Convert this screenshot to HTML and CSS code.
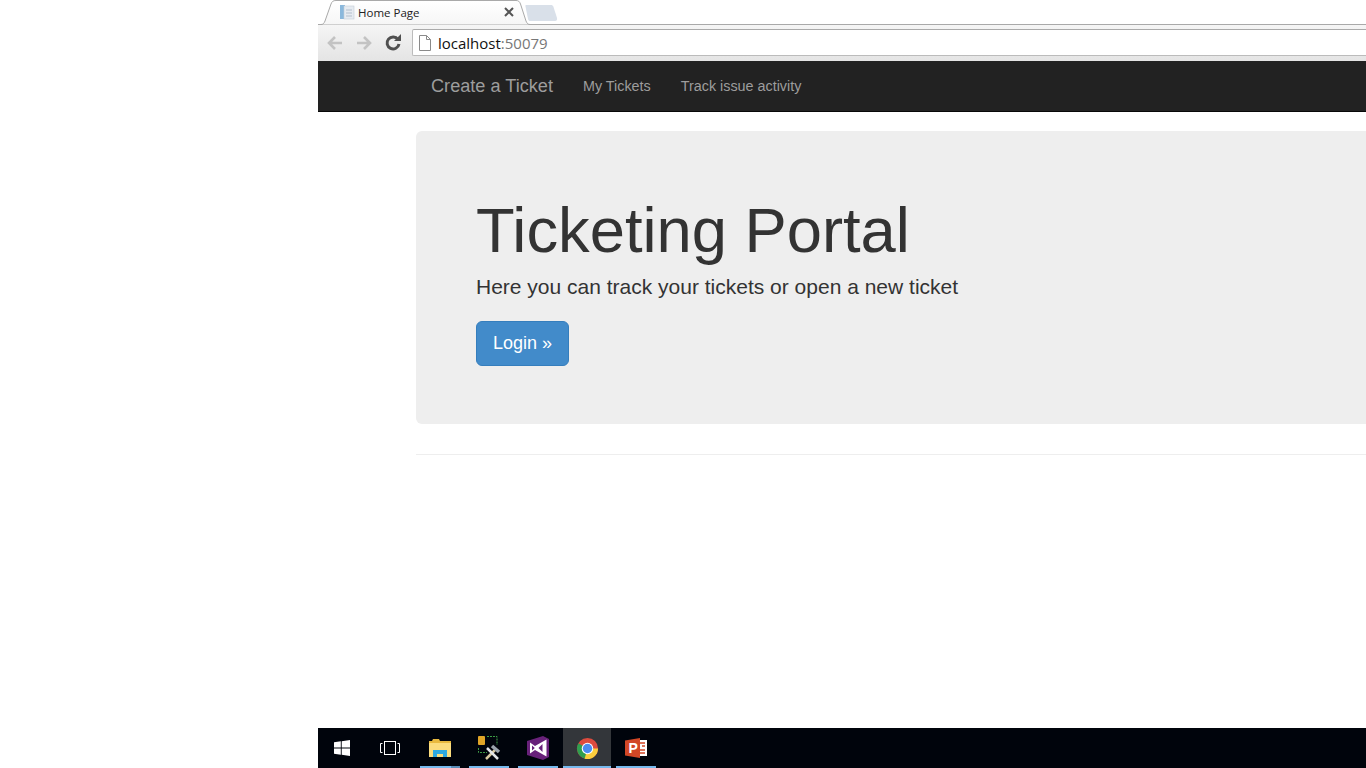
FILE: index.html
```html
<!DOCTYPE html>
<html lang="en">
<head>
    <meta charset="UTF-8">
    <title>Home Page</title>
    <link rel="stylesheet" href="styles.css">
</head>
<body>

<div class="screen">
    <!-- browser tab strip -->
    <div class="tabstrip">
        <svg class="tab-shape" width="214" height="26" viewBox="0 0 214 26">
            <defs>
                <linearGradient id="tabFill" x1="0" y1="0" x2="0" y2="1">
                    <stop offset="0" stop-color="#fff"/>
                    <stop offset="1" stop-color="#f6f6f6"/>
                </linearGradient>
            </defs>
            <path d="M0 24.500H3C5 24.500 6 23.500 7 21L13 4C14 1.500 15 .5 18 .5H198C200.500 .5 201.500 1.500 202.500 4L208 21C209 23.500 210 24.500 212 24.500" fill="url(#tabFill)" stroke="#a9a9a9"/>
        </svg>
        <svg class="favicon" width="16" height="16" viewBox="0 0 16 16">
            <rect x="1" y="1" width="5" height="14" fill="#8ab8dc"/>
            <rect x="5" y="2" width="10" height="13" fill="#e6ebf1" stroke="#c4ccd6" stroke-width=".6"/>
            <path d="M7 6h6M7 9h6M7 12h6" stroke="#b3bfcc"/>
        </svg>
        <span class="tab-title">Home Page</span>
        <svg class="tab-close" width="10" height="10" viewBox="0 0 10 10">
            <path d="M1 1L9 9M9 1L1 9" stroke="#555" stroke-width="2"/>
        </svg>
        <svg class="new-tab" width="33" height="18" viewBox="0 0 33 18">
            <path d="M1 1H26C27 1 28 1.500 28.500 3L32 14C32.500 16 31.500 17 30 17H5C4 17 3.500 16.500 3 15L.5 2.500C.4 1.500 .5 1 1 1Z" fill="#d9e0e9"/>
        </svg>
    </div>

    <!-- browser toolbar -->
    <div class="toolbar">
        <svg class="nav-icon" width="18" height="16" viewBox="0 0 18 16">
            <path d="M16 8H3M9 2L3 8L9 14" fill="none" stroke="#c3c3c3" stroke-width="2.600"/>
        </svg>
        <svg class="nav-icon" width="18" height="16" viewBox="0 0 18 16">
            <path d="M2 8H15M9 2L15 8L9 14" fill="none" stroke="#c3c3c3" stroke-width="2.600"/>
        </svg>
        <svg class="nav-icon" width="18" height="18" viewBox="0 0 18 18">
            <path d="M14 5.500A6 6 0 1 0 15 10" fill="none" stroke="#505050" stroke-width="3"/>
            <path d="M10 7H17V0Z" fill="#505050"/>
        </svg>
        <div class="omnibox">
            <svg class="page-icon" width="12" height="16" viewBox="0 0 12 16">
                <path d="M.5 .5H7.500L11.500 4.500V15.500H.5Z" fill="#fff" stroke="#8a8a8a"/>
                <path d="M7.500 .5V4.500H11.500" fill="none" stroke="#8a8a8a"/>
            </svg>
            <span class="host">localhost</span><span class="port">:50079</span>
        </div>
    </div>

    <!-- site navbar -->
    <nav class="navbar">
        <a class="brand">Create a Ticket</a>
        <a class="nav-link">My Tickets</a>
        <a class="nav-link">Track issue activity</a>
    </nav>

    <main class="content">
        <section class="jumbotron">
            <h1>Ticketing Portal</h1>
            <p class="lead">Here you can track your tickets or open a new ticket</p>
            <a class="btn">Login &raquo;</a>
        </section>
        <hr>
    </main>

    <!-- windows taskbar -->
    <div class="taskbar">
        <div class="task">
            <svg width="16" height="16" viewBox="0 0 16 16">
                <path d="M0 2.300L6.800 1.300V7.500H0ZM7.700 1.200L16 0V7.500H7.700ZM0 8.400H6.800V14.700L0 13.700ZM7.700 8.400H16V16L7.700 14.800Z" fill="#fff"/>
            </svg>
        </div>
        <div class="task">
            <svg class="task-view" width="20" height="14" viewBox="0 0 20 14">
                <rect x="4.500" y=".5" width="11" height="13" fill="none" stroke="#fff"/>
                <path d="M2.500 2.500H.5V11.500H2.500M17.500 2.500H19.500V11.500H17.500" fill="none" stroke="#fff"/>
            </svg>
        </div>
        <div class="task task-open task-stacked">
            <svg width="22" height="18" viewBox="0 0 22 18">
                <path d="M0 2H3L4 0H10L11 2H22V18H0Z" fill="#e8b93f"/>
                <rect x="0" y="4" width="22" height="14" fill="#fbdc7d"/>
                <path d="M4 18V11H18V18H14V15H8V18Z" fill="#2ea8e0"/>
            </svg>
        </div>
        <div class="task task-open">
            <svg width="26" height="26" viewBox="0 0 26 26">
                <rect x="2" y="1" width="7" height="9" rx="1" fill="#e0a527"/>
                <path d="M11 1.500H21V10M2.500 13V17.500H11" fill="none" stroke="#3d9b45" stroke-dasharray="2 1"/>
                <path d="M10 24L20 14" stroke="#d8c9a0" stroke-width="2.500"/>
                <path d="M16 11L23 17" stroke="#9aa3ad" stroke-width="3.500"/>
                <path d="M11 13L22 24" stroke="#e3e6ea" stroke-width="2.500"/>
            </svg>
        </div>
        <div class="task task-open">
            <svg width="22" height="24" viewBox="0 0 22 24">
                <path d="M16 0L22 3V21L16 24L0 19V5Z" fill="#68217a"/>
                <path d="M19.500 3.500V20.500L8 14L3 17.500V6.500L8 10Z" fill="#fff"/>
                <path d="M5 9.500V14.500L7.800 12ZM15.500 8V16L11.500 12Z" fill="#68217a"/>
            </svg>
        </div>
        <div class="task task-active">
            <svg width="23" height="23" viewBox="0 0 24 24">
                <circle cx="12" cy="12" r="11" fill="#dd4b3e"/>
                <path d="M12 12L2.500 6.500A11 11 0 0 0 12 23Z" fill="#2f9e4f"/>
                <path d="M12 12L23 12A11 11 0 0 1 9 22.600Z" fill="#fbce3d"/>
                <circle cx="12" cy="12" r="6" fill="#fff"/>
                <circle cx="12" cy="12" r="4.900" fill="#4a8cf0"/>
            </svg>
        </div>
        <div class="task task-open">
            <svg width="22" height="20" viewBox="0 0 22 20">
                <path d="M12 2H22V18H12Z" fill="#fff"/>
                <path d="M15 5H20M17 8H20M15 12H20M15 15H20" stroke="#d24726" stroke-width="1.600"/>
                <path d="M0 2.500L15 0V20L0 17.500Z" fill="#d24726"/>
                <text class="ppt-letter" x="3.500" y="14.500">P</text>
            </svg>
        </div>
    </div>
</div>

</body>
</html>
```

FILE: styles.css
```css
* {
    box-sizing: border-box;
}

html, body {
    margin: 0;
    height: 100%;
    overflow: hidden;
    background-color: #fff;
}

body {
    font-family: "Liberation Sans", Arial, sans-serif;
    color: #333;
}

.screen {
    margin-left: 318px;
    height: 768px;
    display: flex;
    flex-direction: column;
}

/* tab strip */
.tabstrip {
    height: 25px;
    flex: none;
    position: relative;
    display: flex;
    align-items: center;
    padding-left: 21px;
    border-bottom: 1px solid #a9a9a9;
}

.tab-shape {
    position: absolute;
    left: 0;
    top: 0;
}

.favicon {
    position: relative;
    margin-right: 3px;
}

.tab-title {
    position: relative;
    font-family: "Open Sans", sans-serif;
    font-size: 11.5px;
    color: #222;
    width: 146px;
}

.tab-close {
    position: relative;
}

.new-tab {
    position: relative;
    margin-left: 11px;
    margin-top: 1px;
}

/* toolbar */
.toolbar {
    height: 36px;
    flex: none;
    display: flex;
    align-items: center;
    gap: 11px;
    padding: 4px 0 5px 8px;
    background: linear-gradient(#f5f5f5, #e4e4e4);
}

.omnibox {
    flex: 1;
    height: 27px;
    display: flex;
    align-items: center;
    margin-left: -1px;
    padding-left: 6px;
    background-color: #fff;
    border: 1px solid #bbb;
    border-top-color: #aaa;
    border-right: 0;
    border-radius: 2px 0 0 2px;
    font-family: "Open Sans", sans-serif;
    font-size: 15px;
}

.page-icon {
    margin-right: 7px;
}

.host {
    color: #111;
}

.port {
    color: #777;
}

/* navbar */
.navbar {
    height: 51px;
    flex: none;
    display: flex;
    align-items: center;
    padding-left: 113px;
    background-color: #222;
    border-bottom: 1px solid #080808;
}

.brand {
    font-size: 18.15px;
    color: #9d9d9d;
    margin-right: 30px;
}

.nav-link {
    font-size: 14.35px;
    color: #9d9d9d;
    margin-right: 30px;
}

/* page content */
.content {
    flex: 1;
    padding: 19px 0 0 98px;
}

.jumbotron {
    height: 293px;
    padding: 65px 60px 0;
    background-color: #eee;
    border-radius: 6px 0 0 6px;
}

h1 {
    margin: 0;
    font-size: 63.3px;
    font-weight: 500;
    line-height: 69px;
    color: #333;
}

.lead {
    margin: 7px 0 20px;
    font-size: 21px;
    line-height: 1.4;
    color: #333;
}

.btn {
    display: inline-block;
    padding: 10px 16px;
    font-size: 18px;
    line-height: 23px;
    color: #fff;
    background-color: #428bca;
    border: 1px solid #357ebd;
    border-radius: 6px;
}

hr {
    margin: 30px 0 0;
    border: 0;
    border-top: 1px solid #eee;
}

/* taskbar */
.taskbar {
    height: 40px;
    flex: none;
    display: flex;
    background-color: #00040c;
}

.task {
    width: 48px;
    height: 40px;
    margin-right: 1px;
    display: flex;
    align-items: center;
    justify-content: center;
}

.task-view {
    margin-right: 2px;
}

.task-open {
    background: linear-gradient(#76b9ed, #76b9ed) center bottom / 40px 2px no-repeat;
}

.task-stacked {
    background: linear-gradient(90deg, #76b9ed 31px, #5a8db8 31px) center bottom / 40px 2px no-repeat;
}

.task-active {
    background-color: #33363a;
    box-shadow: inset 0 -2px 0 #76b9ed;
}

.ppt-letter {
    font-family: "Liberation Sans", Arial, sans-serif;
    font-size: 14px;
    font-weight: 700;
    fill: #fff;
}
```
